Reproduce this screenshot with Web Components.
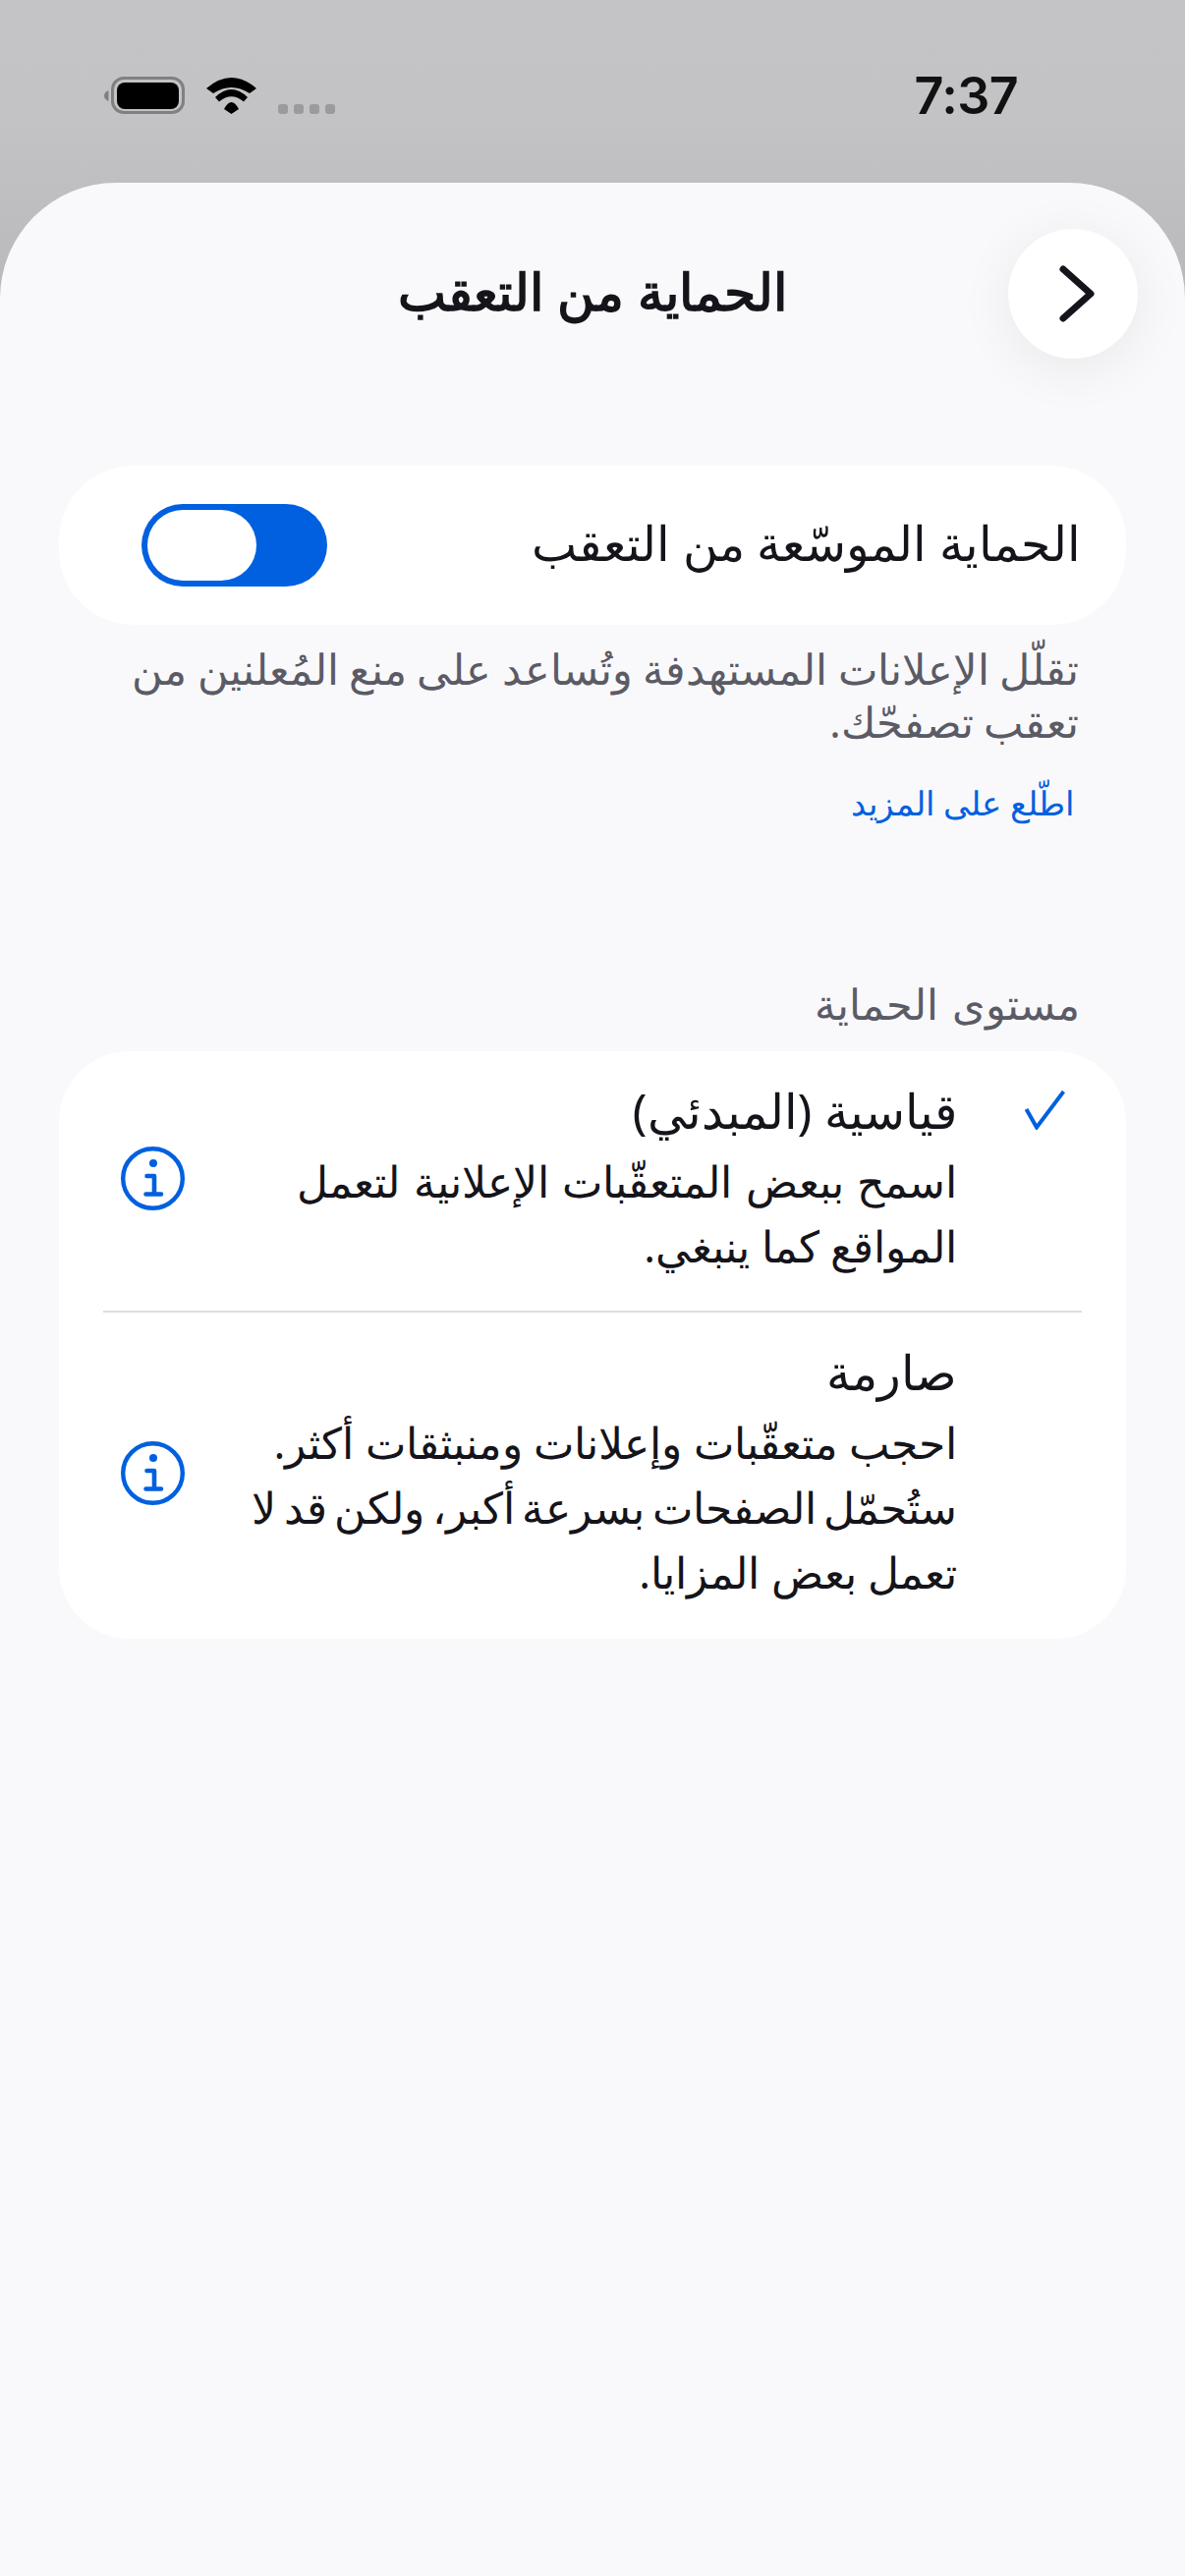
<!DOCTYPE html>
<html lang="ar" dir="rtl">
<head>
<meta charset="utf-8">
<style>
  html, body { margin: 0; padding: 0; }
  body { width: 1206px; height: 2622px; background: linear-gradient(#c4c4c6 0, #c3c3c5 120px, #b8b8ba 320px, #b8b8ba 100%); overflow: hidden; font-family: "Noto Sans", "DejaVu Sans", sans-serif; }
</style>
</head>
<body>
<status-bar></status-bar>
<sheet-view>
  <sheet-header title="الحماية من التعقب"></sheet-header>
  <toggle-row label="الحماية الموسّعة من التعقب"></toggle-row>
  <p-note link="اطّلع على المزيد">تقلّل الإعلانات المستهدفة وتُساعد على منع المُعلنين من تعقب تصفحّك.</p-note>
  <level-list heading="مستوى الحماية">
    <level-item name="قياسية (المبدئي)" checked><span style="word-spacing:2px">اسمح ببعض المتعقّبات الإعلانية لتعمل</span><br>المواقع كما ينبغي.</level-item>
    <level-item name="صارمة" class="lower">احجب متعقّبات وإعلانات ومنبثقات أكثر.<br><span style="word-spacing:-4px">ستُحمّل الصفحات بسرعة أكبر، ولكن قد لا</span><br>تعمل بعض المزايا.</level-item>
  </level-list>
</sheet-view>
<script>
const define = (name, css, html) => {
  customElements.define(name, class extends HTMLElement {
    connectedCallback() {
      if (this.shadowRoot) return;
      this.attachShadow({mode: 'open'});
      this.shadowRoot.innerHTML = `<style>${css}</style>${typeof html === 'function' ? html(this) : html}`;
    }
  });
};

define('status-bar', `
  :host { display: flex; direction: ltr; height: 186px; align-items: flex-start; justify-content: space-between; box-sizing: border-box; padding: 78px 170px 0 106px; }
  .left { display: flex; align-items: flex-end; gap: 22px; height: 38px; }
  .left svg { display: block; }
  .time { font: 600 52px/40px Inter, sans-serif; color: #111; letter-spacing: -.6px; }
  .dots { display: flex; gap: 6px; }
  .dots i { width: 10px; height: 10px; border-radius: 3px; background: #9b9b9d; display: block; }
`, `
  <div class="left">
    <svg width="82" height="38" viewBox="0 0 82 38"><path d="M4.5 14 C1.5 15 0 17 0 19.5 C0 22 1.5 24 4.5 25Z" fill="#808082"/><rect x="8.5" y="1.5" width="72" height="35" rx="11.5" fill="none" stroke="#808082" stroke-width="3"/><rect x="13" y="6" width="63" height="27" rx="8" fill="#000"/></svg>
    <svg width="51" height="37" viewBox="0 0 51 37"><path d="M0 11Q25.5 -11 51 11L44 16Q25.5 4 7 16Z" fill="#000"/><path d="M9 20Q25.5 4 42 20L38 24.5Q25.5 14 13 24.5Z" fill="#000"/><path d="M18 32Q25.5 18 33 32L25.5 37Z" fill="#000"/></svg>
    <div class="dots"><i></i><i></i><i></i><i></i></div>
  </div>
  <div class="time">7:37</div>
`);

define('sheet-view', `
  :host { display: block; height: 2436px; background: #f9f9fb; border-radius: 118px 118px 0 0; box-sizing: border-box; padding: 0 60px; position: relative; }
`, `<slot></slot>`);

define('sheet-header', `
  :host { display: flex; justify-content: center; align-items: center; height: 220px; box-sizing: border-box; margin-bottom: 68px; }
  h1 { font: 700 52px/60px "Noto Sans", sans-serif; color: #15141a; margin: 0; }
  .close { position: absolute; right: 48px; top: 47px; width: 132px; height: 132px; border-radius: 50%; background: #fff; box-shadow: 0 10px 56px rgba(0,0,0,.07); display: flex; align-items: center; justify-content: center; }
  .close svg { margin-left: 8px; }
`, el => `
  <h1>${el.getAttribute('title')}</h1>
  <div class="close"><svg width="40" height="62" viewBox="0 0 40 62"><path d="M6 6 L34 31 L6 56" fill="none" stroke="#15141a" stroke-width="7" stroke-linecap="round" stroke-linejoin="round"/></svg></div>
`);

define('toggle-row', `
  :host { display: flex; height: 162px; align-items: center; justify-content: space-between; background: #fff; border-radius: 76px; padding: 0 46px 0 84px; box-sizing: border-box; }
  span { font: 400 49px/60px "Noto Sans", sans-serif; color: #15141a; position: relative; top: -3px; }
  .sw { width: 189px; height: 84px; border-radius: 42px; background: #0060df; display: flex; justify-content: flex-start; direction: ltr; padding: 6px; box-sizing: border-box; }
  .sw i { display: block; width: 111px; height: 72px; border-radius: 36px; background: #fff; }
`, el => `<span>${el.getAttribute('label')}</span><div class="sw"><i></i></div>`);

define('p-note', `
  :host { display: block; padding: 17px 48px 0 60px; }
  p { font: 400 42.6px/54px "Noto Sans", sans-serif; word-spacing: -.7px; color: #5b5b66; margin: 0; }
  a { display: block; font: 400 33.8px/48px "Noto Sans", sans-serif; color: #0060df; margin-top: 32px; padding-right: 5px; }
`, el => `<p><slot></slot></p><a>${el.getAttribute('link')}</a>`);

define('level-list', `
  :host { display: block; margin-top: 156px; }
  h2 { font: 400 43.4px/50px "Noto Sans", sans-serif; word-spacing: 3px; color: #5b5b66; margin: 0 47px 23px 0; }
  .card { background: #fff; border-radius: 72px; padding: 0 45px; }
`, el => `<h2>${el.getAttribute('heading')}</h2><div class="card"><slot></slot></div>`);

define('level-item', `
  :host { display: grid; grid-template-columns: 110px 1fr 127px; align-items: center; padding: 22px 0 33px; border-bottom: 2px solid #dcdce2; direction: ltr; }
  :host(:last-child) { border-bottom: 0; padding-bottom: 35px; }
  .info { margin: 6px 0 0 18px; display: block; }
  :host(.lower) .info { margin-top: 8px; }
  .text { direction: rtl; }
  .name { font: 400 49px/77px "Noto Sans", sans-serif; color: #15141a; }
  .desc { font: 400 44px/66px "Noto Sans", sans-serif; color: #15141a; white-space: nowrap; }
  .check { align-self: start; justify-self: end; margin-top: 18px; margin-right: 17px; }
`, el => `
  <svg class="info" width="65" height="65" viewBox="0 0 65 65"><circle cx="32.5" cy="32.5" r="30.3" fill="none" stroke="#0060df" stroke-width="4.4"/><circle cx="33" cy="17" r="4" fill="#0060df"/><path d="M26.5 30H34V48.5M25.5 48.5H41" fill="none" stroke="#0060df" stroke-width="4.6" stroke-linecap="round" stroke-linejoin="round"/></svg>
  <div class="text"><div class="name">${el.getAttribute('name')}</div><div class="desc"><slot></slot></div></div>
  ${el.hasAttribute('checked') ? `<svg class="check" width="41" height="40" viewBox="0 0 41 40"><path d="M1.5 19 L12 37.5 L39.5 1" fill="none" stroke="#0060df" stroke-width="4"/></svg>` : `<i></i>`}
`);
</script>
</body>
</html>
